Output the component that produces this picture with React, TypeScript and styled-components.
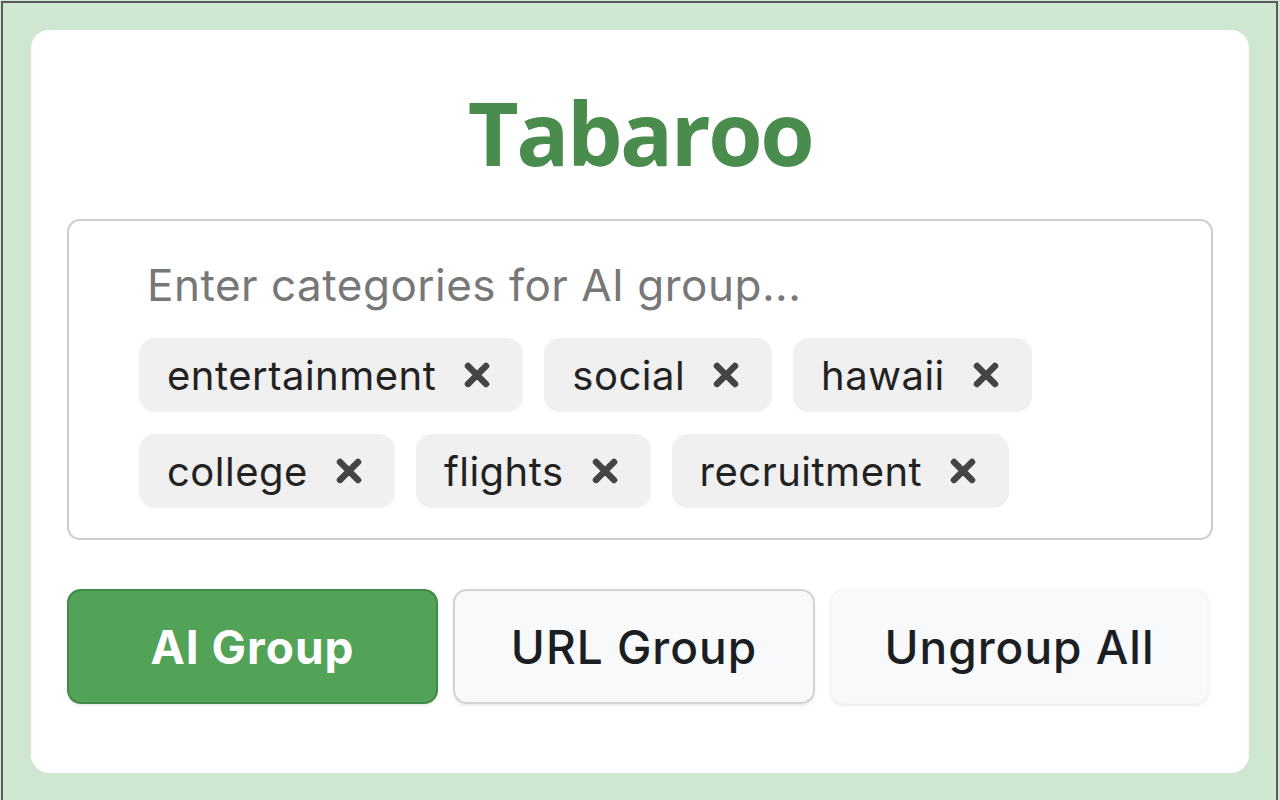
import React from "react";
import styled, { createGlobalStyle } from "styled-components";

const GlobalStyle = createGlobalStyle`
  html, body {
    margin: 0;
    padding: 0;
    background: #cfe6d1;
  }
  * {
    box-sizing: border-box;
  }
`;

const ScFrame = styled.div`
  height: 799px;
  margin: 1px 2px 0 1px;
  border: 2px solid #5b5b5b;
  border-bottom: none;
  background: #cfe6d1;
  padding: 27px 27px 0 28px;
`;

const ScCard = styled.div`
  height: 743px;
  background: #fff;
  border-radius: 18px;
  padding: 58px 36px 0 36px;
  display: flex;
  flex-direction: column;
`;

const ScTitle = styled.h1`
  margin: 0 0 43px;
  text-align: center;
  font-family: "Open Sans", "DejaVu Sans", sans-serif;
  font-weight: 700;
  font-size: 88px;
  line-height: 1;
  letter-spacing: -2.5px;
  color: #4a8b4e;
`;

const ScInputBox = styled.div`
  border: 2px solid #cdcdcd;
  border-radius: 13px;
  padding: 38px 70px 30px 70px;
  display: flex;
  flex-direction: column;
  gap: 26px;
`;

const ScPlaceholder = styled.div`
  padding-left: 8px;
  font-family: Inter, "Liberation Sans", sans-serif;
  font-size: 44px;
  line-height: 53px;
  letter-spacing: 0.5px;
  color: #777;
`;

const ScTagList = styled.div`
  display: flex;
  flex-wrap: wrap;
  column-gap: 21px;
  row-gap: 22px;
`;

const ScTag = styled.span`
  display: inline-flex;
  align-items: center;
  height: 74px;
  padding: 0 33px 0 28px;
  border-radius: 16px;
  background: #f0f0f0;
  font-family: Inter, "Liberation Sans", sans-serif;
  font-size: 40px;
  letter-spacing: 0.5px;
  color: #222;
`;

const ScRemove = styled.svg`
  margin-left: 28px;
  width: 26px;
  height: 26px;
  flex: none;
`;

const ScActions = styled.div`
  margin-top: 49px;
  display: grid;
  grid-template-columns: 371fr 362fr 379fr;
  column-gap: 15px;
  margin-right: 4px;
`;

const ScButton = styled.button<{ $variant: "primary" | "outline" | "plain" }>`
  height: 115px;
  border-radius: 14px;
  font-family: Inter, "Liberation Sans", sans-serif;
  font-size: 46px;
  letter-spacing: 1px;
  cursor: pointer;
  background: ${(p) => (p.$variant === "primary" ? "#52a257" : "#f8f9fb")};
  color: ${(p) => (p.$variant === "primary" ? "#fff" : "#1b1e22")};
  font-weight: ${(p) => (p.$variant === "primary" ? 700 : 500)};
  border: 2px solid
    ${(p) =>
      p.$variant === "primary"
        ? "#3f8a44"
        : p.$variant === "outline"
        ? "#d3d3d3"
        : "#f5f6f8"};
  box-shadow: 0 2px 3px rgba(0, 0, 0, 0.08);
`;

const tags = ["entertainment", "social", "hawaii", "college", "flights", "recruitment"];

const Remove = () => (
  <ScRemove viewBox="0 0 26 26">
    <path d="M4 4 L22 22 M22 4 L4 22" stroke="#444" strokeWidth="6.5" strokeLinecap="round" />
  </ScRemove>
);

export default function App() {
  return (
    <>
      <GlobalStyle />
      <ScFrame>
        <ScCard>
          <ScTitle>Tabaroo</ScTitle>
          <ScInputBox>
            <ScPlaceholder>Enter categories for AI group...</ScPlaceholder>
            <ScTagList>
              {tags.map((t) => (
                <ScTag key={t}>
                  {t}
                  <Remove />
                </ScTag>
              ))}
            </ScTagList>
          </ScInputBox>
          <ScActions>
            <ScButton $variant="primary">AI Group</ScButton>
            <ScButton $variant="outline">URL Group</ScButton>
            <ScButton $variant="plain">Ungroup All</ScButton>
          </ScActions>
        </ScCard>
      </ScFrame>
    </>
  );
}
